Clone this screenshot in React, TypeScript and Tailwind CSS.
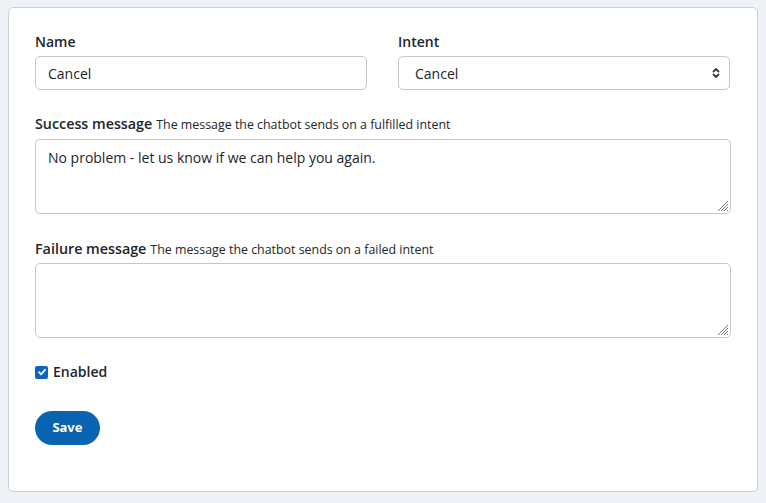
import React from "react";

export default function App() {
  return (
    <div className="min-h-[503px] w-[766px] bg-[#eef2f6] pt-[7px] pl-[8px] pr-[8px] pb-[11px]" style={{ fontFamily: '"Open Sans", "Noto Sans", sans-serif' }}>
      <div className="h-[485px] w-[750px] rounded-[5px] border border-[#c8d0d9] bg-white px-[26px] pt-[24px]">
        <div className="flex gap-[31px]">
          <div className="flex w-[332px] flex-col">
            <label className="h-[20px] text-[14px] font-semibold leading-[20px] text-[#212529]">Name</label>
            <div className="mt-[4px] flex h-[34px] items-center rounded-[5px] border border-[#c3c8cf] px-[12px] text-[14px] text-[#212529]">Cancel</div>
          </div>
          <div className="flex w-[332px] flex-col">
            <label className="h-[20px] text-[14px] font-semibold leading-[20px] text-[#212529]">Intent</label>
            <div className="mt-[4px] flex h-[34px] items-center justify-between rounded-[5px] border border-[#c3c8cf] pl-[16px] pr-[8px] text-[14px] text-[#212529]">
              <span>Cancel</span>
              <svg width="10" height="14" viewBox="0 0 10 14" fill="none" stroke="#343a40" strokeWidth="1.8" strokeLinecap="round" strokeLinejoin="round">
                <path d="M2.5 5.5 L5 3 L7.5 5.5" />
                <path d="M2.5 8.5 L5 11 L7.5 8.5" />
              </svg>
            </div>
          </div>
        </div>

        <div className="mt-[24px] flex h-[20px] items-baseline gap-[4px] text-[#212529]">
          <span className="text-[14.3px] font-semibold leading-[20px]">Success message</span>
          <span className="text-[12.4px] leading-[20px]">The message the chatbot sends on a fulfilled intent</span>
        </div>
        <div className="relative mt-[5px] h-[75px] rounded-[5px] border border-[#c3c8cf] px-[12px] pt-[7px] text-[14px] text-[#212529]">
          No problem - let us know if we can help you again.
          <Grip />
        </div>

        <div className="mt-[25px] flex h-[20px] items-baseline gap-[4px] text-[#212529]">
          <span className="text-[14.3px] font-semibold leading-[20px]">Failure message</span>
          <span className="text-[12.4px] leading-[20px]">The message the chatbot sends on a failed intent</span>
        </div>
        <div className="relative mt-[4px] h-[75px] rounded-[5px] border border-[#c3c8cf]">
          <Grip />
        </div>

        <div className="mt-[24px] flex items-center gap-[5px]">
          <span className="flex h-[13px] w-[13px] items-center justify-center rounded-[2px] bg-[#0b63c4]">
            <svg width="10" height="10" viewBox="0 0 10 10" fill="none" stroke="white" strokeWidth="1.8" strokeLinecap="round" strokeLinejoin="round">
              <path d="M2 5.2 L4.1 7.3 L8 2.8" />
            </svg>
          </span>
          <span className="text-[14px] font-semibold leading-[20px] text-[#212529]">Enabled</span>
        </div>

        <button className="mt-[29px] flex h-[34px] w-[65px] items-center justify-center rounded-full bg-[#0a63b0] text-[13px] font-bold text-white" style={{ fontFamily: '"Noto Sans", sans-serif' }}>
          Save
        </button>
      </div>
    </div>
  );
}

function Grip() {
  return (
    <svg className="absolute bottom-[1px] right-[1px]" width="14" height="14" viewBox="0 0 14 14" stroke="#777" strokeWidth="1">
      <path d="M13 3 L3 13" />
      <path d="M13 6 L6 13" />
      <path d="M13 9 L9 13" />
      <path d="M13 12 L12 13" />
    </svg>
  );
}
